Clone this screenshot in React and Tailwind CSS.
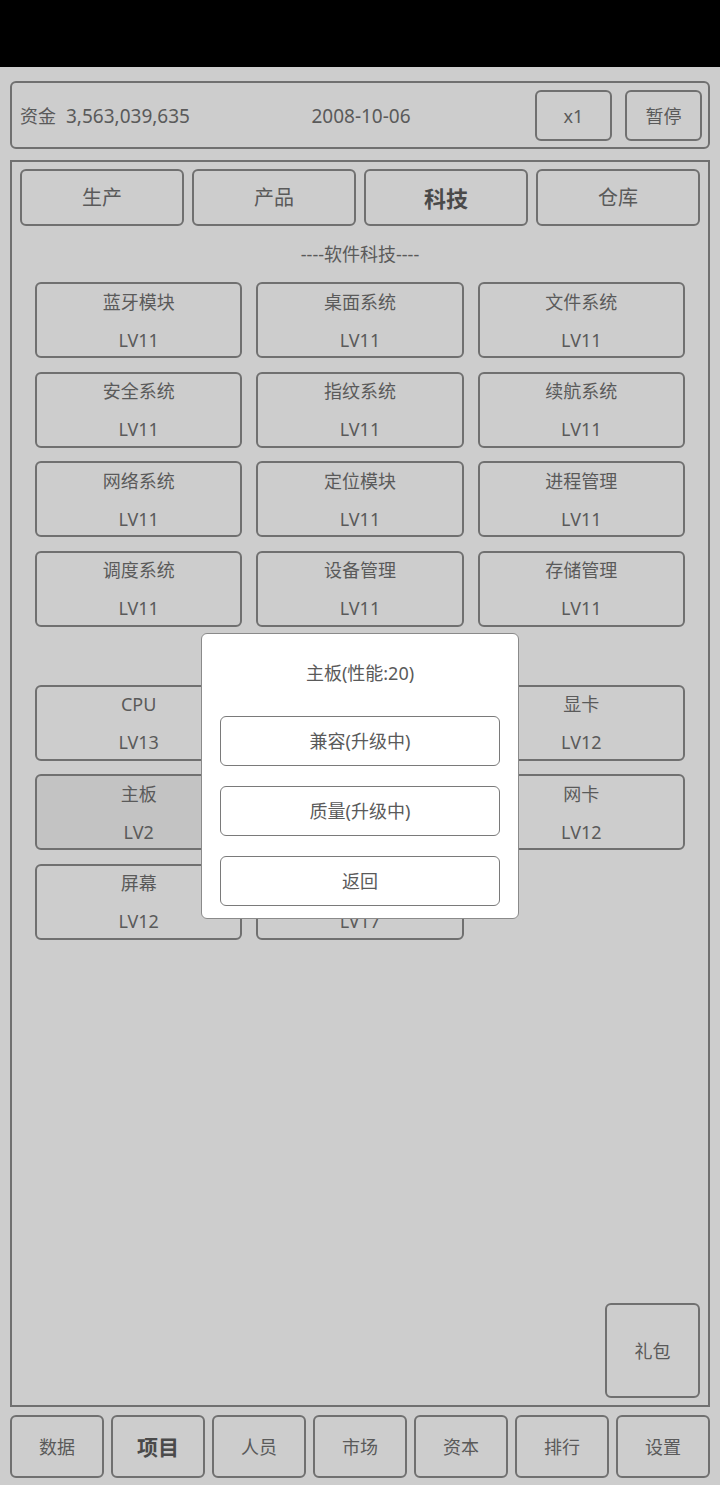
import React from "react";

const soft = [
  ["蓝牙模块", "LV11"], ["桌面系统", "LV11"], ["文件系统", "LV11"],
  ["安全系统", "LV11"], ["指纹系统", "LV11"], ["续航系统", "LV11"],
  ["网络系统", "LV11"], ["定位模块", "LV11"], ["进程管理", "LV11"],
  ["调度系统", "LV11"], ["设备管理", "LV11"], ["存储管理", "LV11"],
];

const hard = [
  ["CPU", "LV13"], ["内存", "LV12"], ["显卡", "LV12"],
  ["主板", "LV2", true], ["硬盘", "LV12"], ["网卡", "LV12"],
  ["屏幕", "LV12"], ["电池", "LV17"],
];

function Item({ name, lv, active }) {
  return (
    <div
      className={
        "h-[76px] border-2 border-[#707070] rounded-[6px] flex flex-col items-center justify-center gap-[11px] text-[18px] leading-[27px] text-[#5a5a5a] pt-[2px] " +
        (active ? "bg-[#c3c3c3]" : "bg-[#cdcdcd]")
      }
    >
      <div>{name}</div>
      <div>{lv}</div>
    </div>
  );
}

const btn = "border-2 border-[#707070] rounded-[6px] flex items-center justify-center";

export default function App() {
  return (
    <div
      className="relative w-[720px] h-[1485px] bg-[#cdcdcd] text-[#5a5a5a] overflow-hidden"
      style={{ fontFamily: '"Noto Sans", "Noto Sans CJK SC", sans-serif' }}
    >
      <div className="h-[67px] bg-black" />

      {/* header */}
      <div className="mx-[10px] mt-[14px] h-[68px] border-2 border-[#707070] rounded-[6px] grid grid-cols-[1fr_auto_1fr] items-center pl-[8px] pr-[6px] text-[19px]">
        <div className="flex items-center gap-[10px] pt-[3px]">
          <span className="text-[18px]">资金</span>
          <span>3,563,039,635</span>
        </div>
        <div className="pt-[3px]">2008-10-06</div>
        <div className="flex justify-end gap-[13px]">
          <div className={btn + " w-[77px] h-[51px] text-[18px] pt-[2px]"}>x1</div>
          <div className={btn + " w-[77px] h-[51px] text-[18px] pt-[2px]"}>暂停</div>
        </div>
      </div>

      {/* main panel */}
      <div className="mx-[10px] mt-[11px] h-[1247px] border-2 border-[#707070] flex flex-col">
        <div className="grid grid-cols-4 gap-[8px] px-[8px] pt-[7px]">
          <div className={btn + " h-[57px] text-[20px] pt-[1px]"}>生产</div>
          <div className={btn + " h-[57px] text-[20px] pt-[1px]"}>产品</div>
          <div className={btn + " h-[57px] text-[22px] font-bold text-[#4a4a4a] pt-[1px]"}>科技</div>
          <div className={btn + " h-[57px] text-[20px] pt-[1px]"}>仓库</div>
        </div>

        <div className="h-[56px] flex items-center justify-center text-[18px]">----软件科技----</div>
        <div className="grid grid-cols-3 gap-x-[14px] gap-y-[13.5px] px-[23px]">
          {soft.map(([n, l]) => (
            <Item key={n} name={n} lv={l} />
          ))}
        </div>

        <div className="h-[58px] flex items-center justify-center text-[18px]">----硬件科技----</div>
        <div className="grid grid-cols-3 gap-x-[14px] gap-y-[13.5px] px-[23px]">
          {hard.map(([n, l, a]) => (
            <Item key={n} name={n} lv={l} active={a} />
          ))}
        </div>

        <div className="flex-1" />
        <div className="flex justify-end pr-[8px] pb-[7px]">
          <div className={btn + " w-[95px] h-[95px] text-[18px] pt-[2px]"}>礼包</div>
        </div>
      </div>

      {/* bottom nav */}
      <div className="mx-[10px] mt-[8px] grid grid-cols-7 gap-[7px]">
        {["数据", "项目", "人员", "市场", "资本", "排行", "设置"].map((t) => (
          <div
            key={t}
            className={
              btn +
              " h-[63px] pt-[2px] " +
              (t === "项目" ? "text-[21px] font-bold text-[#4a4a4a]" : "text-[18px]")
            }
          >
            {t}
          </div>
        ))}
      </div>

      {/* modal */}
      <div className="absolute left-[201px] top-[633px] w-[318px] h-[286px] bg-white border border-[#8a8a8a] rounded-[6px] flex flex-col px-[18px] pb-[12px]">
        <div className="h-[82px] flex items-center justify-center text-[18px] pb-[4px]">主板(性能:20)</div>
        <div className="flex flex-col gap-[20px]">
          <div className="h-[50px] border-[1.5px] border-[#7a7a7a] rounded-[6px] flex items-center justify-center text-[18px] pt-[1px]">兼容(升级中)</div>
          <div className="h-[50px] border-[1.5px] border-[#7a7a7a] rounded-[6px] flex items-center justify-center text-[18px] pt-[1px]">质量(升级中)</div>
          <div className="h-[50px] border-[1.5px] border-[#7a7a7a] rounded-[6px] flex items-center justify-center text-[18px] pt-[1px]">返回</div>
        </div>
      </div>
    </div>
  );
}
